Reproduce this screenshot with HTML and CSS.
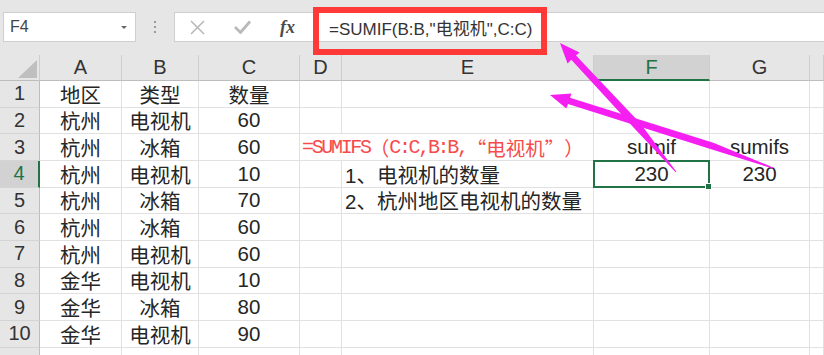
FILE: index.html
```html
<!DOCTYPE html>
<html lang="zh-CN">
<head>
  <meta charset="UTF-8" />
  <title>SUMIF</title>
  <link rel="stylesheet" href="styles.css">
</head>
<body>
  <div class="toolbar">
    <div class="namebox">
      <span>F4</span>
      <span class="caret"></span>
    </div>
    <div class="grip"><i></i><i></i><i></i></div>
    <div class="fbar">
      <span class="fb-btn">
        <svg width="15" height="15" viewBox="0 0 15 15"><path d="M1 1L14 14M14 1L1 14" stroke="#b9b9b9" stroke-width="1.6" fill="none"/></svg>
      </span>
      <span class="fb-btn">
        <svg width="17" height="14" viewBox="0 0 17 14"><path d="M1 7L6.5 12.5L16 1.5" stroke="#b9b9b9" stroke-width="2.8" fill="none"/></svg>
      </span>
      <span class="fb-btn fx">fx</span>
      <span class="formula">=SUMIF(B:B,"电视机",C:C)</span>
    </div>
  </div>

  <div class="sheet">
    <div class="hd corner"><span class="tri"></span></div>
    <div class="hd">A</div>
    <div class="hd">B</div>
    <div class="hd">C</div>
    <div class="hd">D</div>
    <div class="hd">E</div>
    <div class="hd hd-on">F</div>
    <div class="hd">G</div>
    <div class="hd"></div>

    <div class="rh">1</div>
    <div class="c">地区</div><div class="c">类型</div><div class="c">数量</div>
    <div class="c"></div><div class="c"></div><div class="c"></div><div class="c"></div><div class="c"></div>

    <div class="rh">2</div>
    <div class="c">杭州</div><div class="c">电视机</div><div class="c">60</div>
    <div class="c"></div><div class="c"></div><div class="c"></div><div class="c"></div><div class="c"></div>

    <div class="rh">3</div>
    <div class="c">杭州</div><div class="c">冰箱</div><div class="c">60</div>
    <div class="c note">=SUMIFS<span class="w">（</span>C:C,B:B,<span class="q">“</span><span class="w">电视机</span><span class="q q-r">”</span><span class="w">）</span></div>
    <div class="c">sumif</div><div class="c">sumifs</div><div class="c"></div>

    <div class="rh rh-on">4</div>
    <div class="c">杭州</div><div class="c">电视机</div><div class="c">10</div>
    <div class="c"></div><div class="c left">1、电视机的数量</div>
    <div class="c sel">230</div><div class="c">230</div><div class="c"></div>

    <div class="rh">5</div>
    <div class="c">杭州</div><div class="c">冰箱</div><div class="c">70</div>
    <div class="c"></div><div class="c left">2、杭州地区电视机的数量</div>
    <div class="c"></div><div class="c"></div><div class="c"></div>

    <div class="rh">6</div>
    <div class="c">杭州</div><div class="c">冰箱</div><div class="c">60</div>
    <div class="c"></div><div class="c"></div><div class="c"></div><div class="c"></div><div class="c"></div>

    <div class="rh">7</div>
    <div class="c">杭州</div><div class="c">电视机</div><div class="c">60</div>
    <div class="c"></div><div class="c"></div><div class="c"></div><div class="c"></div><div class="c"></div>

    <div class="rh">8</div>
    <div class="c">金华</div><div class="c">电视机</div><div class="c">10</div>
    <div class="c"></div><div class="c"></div><div class="c"></div><div class="c"></div><div class="c"></div>

    <div class="rh">9</div>
    <div class="c">金华</div><div class="c">冰箱</div><div class="c">80</div>
    <div class="c"></div><div class="c"></div><div class="c"></div><div class="c"></div><div class="c"></div>

    <div class="rh">10</div>
    <div class="c">金华</div><div class="c">电视机</div><div class="c">90</div>
    <div class="c"></div><div class="c"></div><div class="c"></div><div class="c"></div><div class="c"></div>

    <div class="rh"></div>
    <div class="c"></div><div class="c"></div><div class="c"></div>
    <div class="c"></div><div class="c"></div><div class="c"></div><div class="c"></div><div class="c"></div>
  </div>

  <!-- annotations drawn on top of the screenshot -->
  <div class="redbox"></div>
  <svg class="arrows" width="824" height="355" viewBox="0 0 824 355">
    <polygon points="560,43 567.5,63.5 571.3,59.8 634,128 675.6,172.3 676.4,171.7 640,123 576,55.5 579.5,52.5" />
    <polygon points="550,95 566.3,108.6 568,104 712,149.5 772.8,168.5 773.2,167.5 714,143 570,97.8 571.5,93.6" />
  </svg>
</body>
</html>
```

FILE: styles.css
```css
body {
  margin: 0;
  width: 824px;
  height: 355px;
  overflow: hidden;
  position: relative;
  background: #fff;
  font-family: "Liberation Sans", "Noto Sans CJK SC", sans-serif;
  color: #262626;
}

.toolbar {
  height: 55px;
  background: #e6e6e6;
  display: flex;
  align-items: flex-start;
  padding: 12px 0 0 3px;
  box-sizing: border-box;
}

.namebox {
  width: 133px;
  height: 30px;
  box-sizing: border-box;
  background: #fff;
  border: 1px solid #cfcfcf;
  display: flex;
  align-items: center;
  justify-content: space-between;
  padding: 0 8px 0 6px;
  font-size: 16px;
  color: #444;
}

.caret {
  width: 0;
  height: 0;
  border-left: 3px solid transparent;
  border-right: 3px solid transparent;
  border-top: 3px solid #666;
}

.grip {
  width: 38px;
  height: 30px;
  display: flex;
  flex-direction: column;
  align-items: center;
  justify-content: center;
  gap: 3px;
}

.grip i {
  width: 2px;
  height: 2px;
  background: #9a9a9a;
}

.fbar {
  flex: 1;
  height: 30px;
  box-sizing: border-box;
  background: #fff;
  border: 1px solid #cfcfcf;
  border-right: none;
  display: flex;
  align-items: center;
}

.fb-btn {
  width: 45px;
  display: flex;
  justify-content: center;
  align-items: center;
}

.fx {
  font-family: "Liberation Serif", serif;
  font-style: italic;
  font-weight: bold;
  font-size: 18px;
  color: #4a4a4a;
}

.formula {
  padding-left: 19px;
  font-size: 17px;
  color: #333;
}

.sheet {
  display: grid;
  grid-template-columns: 40px 82px 77px 101px 42px 252px 116px 100px 14px;
  grid-template-rows: 26px;
  grid-auto-rows: 26.67px;
  font-size: 20.5px;
}

.sheet > div {
  box-sizing: border-box;
  display: flex;
  align-items: center;
  justify-content: center;
  white-space: nowrap;
}

.hd {
  background: #e6e6e6;
  border-right: 1px solid #cdcdcd;
  border-bottom: 1px solid #bdbdbd;
  color: #333;
  font-size: 20px;
}

.hd-on {
  background: #d2d2d2;
  color: #217346;
  border-bottom: 2px solid #217346;
}

.corner {
  position: relative;
}

.tri {
  position: absolute;
  left: 18px;
  top: 5px;
  width: 19px;
  height: 18px;
  background: #bfbfbf;
  clip-path: polygon(100% 0, 100% 100%, 0 100%);
}

.rh {
  background: #e6e6e6;
  border-right: 1px solid #bdbdbd;
  border-bottom: 1px solid #d4d4d4;
  color: #333;
  font-size: 20px;
}

.rh-on {
  background: #d2d2d2;
  color: #217346;
  border-right: 2px solid #217346;
}

.c {
  border-right: 1px solid #e1e1e1;
  border-bottom: 1px solid #e1e1e1;
}

.sheet > .left {
  justify-content: flex-start;
  padding-left: 3px;
}

.sheet > .note {
  grid-column: span 2;
  justify-content: flex-start;
  padding-left: 2px;
  font-family: "Liberation Mono", monospace;
  font-size: 20px;
  letter-spacing: -2.33px;
  color: #f74b4b;
}

.note .w,
.note .q {
  font-family: "Noto Sans CJK SC", sans-serif;
  font-size: 19.5px;
  letter-spacing: 0;
}

.note .q {
  display: inline-block;
  width: 19.5px;
  text-align: right;
}

.note .q-r {
  text-align: left;
}

.sel {
  position: relative;
}

.sel::after {
  content: "";
  position: absolute;
  left: -1px;
  top: -1px;
  right: -1px;
  bottom: -1px;
  border: 2px solid #217346;
}

.sel::before {
  content: "";
  position: absolute;
  right: -3px;
  bottom: -3px;
  width: 5px;
  height: 5px;
  background: #217346;
  border: 1px solid #fff;
  z-index: 1;
}

.redbox {
  position: absolute;
  left: 313px;
  top: 7px;
  width: 234px;
  height: 48px;
  box-sizing: border-box;
  border: 6px solid #ff3838;
}

.arrows {
  position: absolute;
  left: 0;
  top: 0;
}

.arrows polygon {
  fill: #f61ff2;
}
```
